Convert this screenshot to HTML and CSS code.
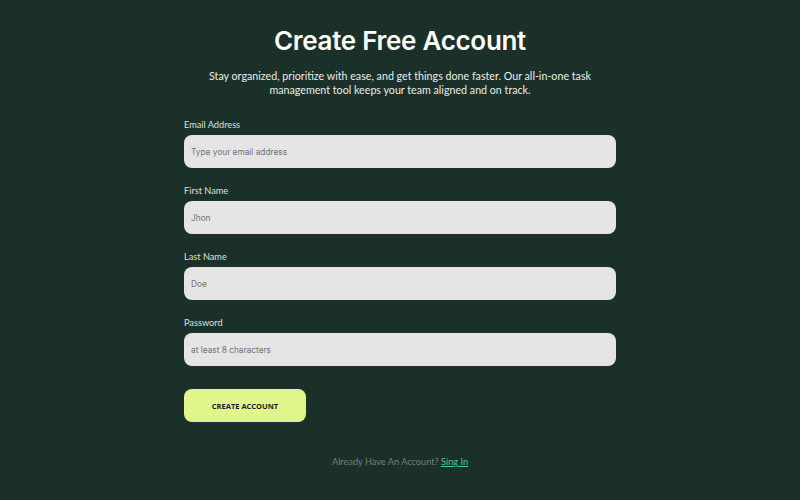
FILE: index.html
```html
<!DOCTYPE html>
<html>
<head>
<meta charset="utf-8">
<link rel="stylesheet" href="styles.css">
</head>
<body>
<main class="page">
  <h1 class="title">Create Free Account</h1>
  <p class="subtitle">Stay organized, prioritize with ease, and get things done faster. Our all-in-one task management tool keeps your team aligned and on track.</p>
  <form class="form">
    <div class="field">
      <label class="label">Email Address</label>
      <input class="input" type="text" placeholder="Type your email address">
    </div>
    <div class="field">
      <label class="label">First Name</label>
      <input class="input" type="text" placeholder="Jhon">
    </div>
    <div class="field">
      <label class="label">Last Name</label>
      <input class="input" type="text" placeholder="Doe">
    </div>
    <div class="field">
      <label class="label">Password</label>
      <input class="input" type="password" placeholder="at least 8 characters">
    </div>
    <button class="btn" type="button">CREATE ACCOUNT</button>
  </form>
  <p class="footer">Already Have An Account? <a class="link" href="#">Sing In</a></p>
</main>
</body>
</html>
```
FILE: styles.css
```css
html, body {
  margin: 0;
  padding: 0;
  background: #1c302a;
  height: 100%;
}
.page {
  display: flex;
  flex-direction: column;
  align-items: center;
  padding-top: 24px;
  font-family: "Open Sans", sans-serif;
}
.title {
  margin: 0;
  font-family: Inter, sans-serif;
  font-weight: 600;
  font-size: 26px;
  letter-spacing: -0.3px;
  color: #ffffff;
  line-height: 34px;
}
.subtitle {
  margin: 11px 0 0;
  width: 390px;
  text-align: center;
  font-family: Lato, sans-serif;
  font-size: 10.7px;
  line-height: 14px;
  color: #e8ede9;
}
.form {
  width: 432px;
  margin-top: 22px;
  display: flex;
  flex-direction: column;
}
.field {
  display: flex;
  flex-direction: column;
  margin-bottom: 17px;
}
.label {
  font-family: Lato, sans-serif;
  font-size: 9.2px;
  color: #d9e0dc;
  line-height: 11px;
  margin-bottom: 5px;
}
.input {
  height: 33px;
  box-sizing: border-box;
  border: none;
  border-radius: 8px;
  background: #e5e5e5;
  padding: 0 7px;
  font-family: Inter, sans-serif;
  font-size: 8.3px;
  color: #333;
  outline: none;
}
.input::placeholder {
  color: #737373;
}
.btn {
  margin-top: 6px;
  width: 122px;
  height: 33px;
  border: none;
  border-radius: 8px;
  background: #e0f58a;
  font-family: "Open Sans", sans-serif;
  font-weight: 700;
  font-size: 7.5px;
  color: #1a1a1a;
  cursor: pointer;
}
.footer {
  margin: 34px 0 0;
  font-family: Lato, sans-serif;
  font-size: 9.2px;
  color: #6f827b;
}
.link {
  color: #4cc98a;
  text-decoration: underline;
}
```
